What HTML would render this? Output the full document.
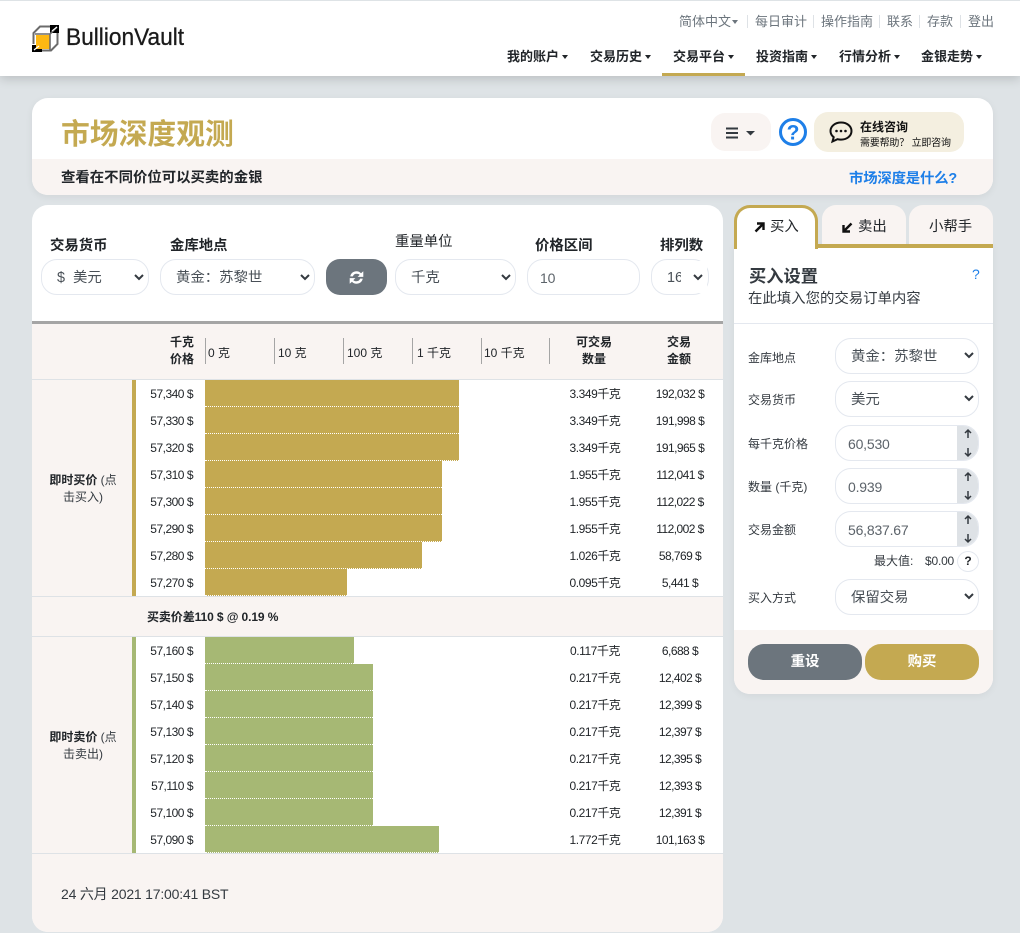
<!DOCTYPE html>
<html lang="zh"><head><meta charset="utf-8"><title>市场深度观测</title>
<style>
*{box-sizing:border-box}
html,body{margin:0;padding:0;width:1020px;height:933px;overflow:hidden;background:#dee3e6;font-family:"Liberation Sans","Noto Sans CJK SC",sans-serif;color:#212529}
.a{position:absolute}
.t{position:absolute;white-space:nowrap;line-height:1.2}
.box{position:absolute;background:#fff;border:1px solid #e4e8ef;border-radius:16px;height:36px;font-size:14.4px;color:#495057;line-height:37px;padding-left:15px;white-space:nowrap;overflow:hidden}
.num{font-size:14px;letter-spacing:-.2px;color:#5c636a;padding-left:12px;line-height:36px}
.car{position:absolute;display:block}
.sp{position:absolute;right:-1px;top:-1px;width:22px;height:36px;background:#dee2e6;border-radius:0 10px 10px 0}
.lb{position:absolute;font-size:12px;line-height:16px;left:748px;color:#343a40;white-space:nowrap}
.h{position:absolute;font-weight:700;font-size:14.4px;white-space:nowrap;color:#212529}
.tn{position:absolute;top:344px;font-size:12px;white-space:nowrap;color:#212529}
.tk{position:absolute;top:338px;width:1px;height:26px;background:#a5a5a5}
.p{position:absolute;left:136px;width:57px;text-align:right;font-size:12px;letter-spacing:-.5px;white-space:nowrap;color:#212529;line-height:16px}
.q{position:absolute;left:550px;width:90px;text-align:center;font-size:12px;letter-spacing:-.45px;white-space:nowrap;color:#212529;line-height:16px}
.v{position:absolute;left:640px;width:80px;text-align:center;font-size:12px;letter-spacing:-.55px;white-space:nowrap;color:#212529;line-height:16px}
.bg{position:absolute;left:205px;height:27px;background:#c4a951;border-bottom:1px dotted #fff}
.bs{position:absolute;left:205px;height:27px;background:#a6b874;border-bottom:1px dotted #fff}
.nav{position:absolute;top:46px;font-size:13px;font-weight:700;color:#212529;white-space:nowrap}
.top{position:absolute;top:11px;font-size:13px;color:#6c757d;white-space:nowrap}
.sep{position:absolute;top:15px;width:1px;height:13px;background:#dee2e6}
.cr{display:inline-block;width:0;height:0;border-left:3.5px solid transparent;border-right:3.5px solid transparent;border-top:4px solid currentColor;vertical-align:2px;margin-left:3px}
</style></head><body>

<!-- header -->
<div class="a" style="left:0;top:0;width:1020px;height:76px;background:#fff;border-top:1px solid #dee3e6;box-shadow:0 3px 10px rgba(0,0,0,.16)"></div>
<svg class="a" style="left:32px;top:25px" width="27" height="27" viewBox="0 0 27 27">
<rect x="0" y="20" width="10" height="7" fill="#000"/>
<rect x="18" y="0" width="9" height="8" fill="#000"/>
<path d="M1.500 19V8L8 1.500H18M25.500 8V19L19 25.500H10" fill="none" stroke="#6b6b6b" stroke-width="2"/>
<rect x="4" y="10" width="14" height="14" fill="#fdb813"/>
<path d="M3 9H18V25M18 9 25 2" fill="none" stroke="#6b6b6b" stroke-width="1.600"/>
<path d="M20 6 25 2M2 25 7 21" fill="none" stroke="#fff" stroke-width="1.200"/>
</svg>
<div class="t" style="left:66px;top:24px;font-size:24px;color:#1a1a1a;-webkit-text-stroke:.3px #1a1a1a;transform:scaleX(.945);transform-origin:0 0">BullionVault</div>

<div class="top" style="left:679px">简体中文<span class="cr" style="margin-left:1px"></span></div>
<div class="sep" style="left:747px"></div>
<div class="top" style="left:755px">每日审计</div><div class="sep" style="left:813px"></div>
<div class="top" style="left:821px">操作指南</div><div class="sep" style="left:879px"></div>
<div class="top" style="left:887px">联系</div><div class="sep" style="left:919px"></div>
<div class="top" style="left:927px">存款</div><div class="sep" style="left:960px"></div>
<div class="top" style="left:968px">登出</div>

<div class="nav" style="left:507px">我的账户<span class="cr"></span></div>
<div class="nav" style="left:590px">交易历史<span class="cr"></span></div>
<div class="nav" style="left:673px">交易平台<span class="cr"></span></div>
<div class="nav" style="left:756px">投资指南<span class="cr"></span></div>
<div class="nav" style="left:839px">行情分析<span class="cr"></span></div>
<div class="nav" style="left:921px">金银走势<span class="cr"></span></div>
<div class="a" style="left:662px;top:73px;width:83px;height:3px;background:#c4a951"></div>

<!-- title card -->
<div class="a" style="left:32px;top:98px;width:961px;height:97px;background:#fff;border-radius:16px;overflow:hidden;box-shadow:0 2px 8px rgba(0,0,0,.06)">
<div class="a" style="left:0;top:61px;width:961px;height:36px;background:#f9f4f2"></div>
</div>
<div class="t" style="left:61px;top:118px;font-size:28.800px;font-weight:700;color:#c4a951">市场深度观测</div>
<div class="t" style="left:61px;top:170px;font-size:14.400px;font-weight:700;color:#212529">查看在不同价位可以买卖的金银</div>
<div class="t" style="left:849px;top:171px;font-size:14.400px;font-weight:700;letter-spacing:-.2px;color:#1e7fe8">市场深度是什么?</div>
<div class="a" style="left:711px;top:113px;width:60px;height:38px;background:#f9f4f2;border-radius:14px"></div>
<svg class="a" style="left:726px;top:127px" width="32" height="12" viewBox="0 0 32 12"><path d="M0 1.500H12M0 6H12M0 10.500H12" stroke="#343a40" stroke-width="2"/><path d="M20 4h9l-4.500 4.500z" fill="#343a40"/></svg>
<svg class="a" style="left:779px;top:118px" width="28" height="28" viewBox="0 0 28 28"><circle cx="14" cy="14" r="12.500" fill="none" stroke="#1e7fe8" stroke-width="3"/><text x="14" y="21.500" text-anchor="middle" font-family="Liberation Sans" font-weight="700" font-size="21" fill="#1e7fe8">?</text></svg>
<div class="a" style="left:814px;top:112px;width:150px;height:40px;background:#f4efe0;border-radius:14px"></div>
<svg class="a" style="left:829px;top:120px" width="24" height="24" viewBox="0 0 24 24"><path d="M12 2.500C6 2.500 1.500 6.300 1.500 11c0 2.500 1.200 4.600 3.200 6.200L3.500 21.500l5-2.300c1.100.3 2.300.4 3.500.4 6 0 10.500-3.800 10.500-8.600S18 2.500 12 2.500z" fill="none" stroke="#111" stroke-width="2"/><circle cx="7.500" cy="11" r="1.300" fill="#111"/><circle cx="12" cy="11" r="1.300" fill="#111"/><circle cx="16.500" cy="11" r="1.300" fill="#111"/></svg>
<div class="t" style="left:860px;top:120px;font-size:12px;font-weight:700;color:#111">在线咨询</div>
<div class="t" style="left:860px;top:138px;font-size:10px;letter-spacing:-.2px;color:#111">需要帮助？ 立即咨询</div>

<!-- main card -->
<div class="a" style="left:32px;top:205px;width:691px;height:727px;background:#fff;border-radius:16px;overflow:hidden">
<div class="a" style="left:0;top:116px;width:691px;height:3px;background:#a5a5a5"></div>
<div class="a" style="left:0;top:119px;width:691px;height:56px;background:#f9f4f2;border-bottom:1px solid #dee2e6"></div>
<div class="a" style="left:0;top:175px;width:100px;height:216px;background:#f9f4f2"></div>
<div class="a" style="left:100px;top:175px;width:4px;height:216px;background:#c4a951"></div>
<div class="a" style="left:0;top:391px;width:691px;height:41px;background:#f9f4f2;border-top:1px solid #dee2e6;border-bottom:1px solid #dee2e6"></div>
<div class="a" style="left:0;top:432px;width:100px;height:216px;background:#f9f4f2"></div>
<div class="a" style="left:100px;top:432px;width:4px;height:216px;background:#a6b874"></div>
<div class="a" style="left:0;top:648px;width:691px;height:79px;background:#f9f4f2;border-top:1px solid #dee2e6"></div>
</div>

<!-- controls -->
<div class="h" style="left:50px;top:234px">交易货币</div>
<div class="h" style="left:170px;top:234px">金库地点</div>
<div class="t" style="left:395px;top:234px;font-size:14.400px;color:#212529">重量单位</div>
<div class="h" style="left:535px;top:234px">价格区间</div>
<div class="h" style="left:660px;top:234px">排列数</div>
<div class="box" style="left:41px;top:259px;width:108px">$&nbsp; 美元</div>
<div class="box" style="left:160px;top:259px;width:155px">黄金：苏黎世</div>
<div class="a" style="left:326px;top:259px;width:61px;height:36px;border-radius:14px;background:#6c757d"></div>
<svg class="a" style="left:348px;top:269px" width="17" height="17" viewBox="0 0 15 15"><path d="M2 6.500C2.500 3.500 5 2 7.500 2c1.700 0 3 .7 4 1.800L13.500 2v5h-5l1.800-1.800C9.700 4.500 8.700 4.200 7.500 4.200 6 4.200 4.800 5 4.300 6.500zM13 8.500c-.5 3-3 4.500-5.500 4.500-1.700 0-3-.7-4-1.800L1.500 13V8h5l-1.800 1.800c.6.700 1.600 1 2.800 1 1.500 0 2.700-.8 3.200-2.300z" fill="#fff"/></svg>
<div class="box" style="left:395px;top:259px;width:121px">千克</div>
<div class="box num" style="left:527px;top:259px;width:113px">10</div>
<div class="box" style="left:651px;top:259px;width:58px">16</div>
<svg class="car" style="left:134px;top:274px" width="10" height="7" viewBox="0 0 10 7"><path d="M1 1l4 4 4-4" fill="none" stroke="#343a40" stroke-width="2"/></svg>
<svg class="car" style="left:300px;top:274px" width="10" height="7" viewBox="0 0 10 7"><path d="M1 1l4 4 4-4" fill="none" stroke="#343a40" stroke-width="2"/></svg>
<svg class="car" style="left:501px;top:274px" width="10" height="7" viewBox="0 0 10 7"><path d="M1 1l4 4 4-4" fill="none" stroke="#343a40" stroke-width="2"/></svg>
<div class="a" style="left:681px;top:261px;width:26px;height:32px;background:#fff"></div>
<svg class="car" style="left:693px;top:274px" width="10" height="7" viewBox="0 0 10 7"><path d="M1 1l4 4 4-4" fill="none" stroke="#343a40" stroke-width="2"/></svg>

<!-- table head -->
<div class="t" style="left:164px;top:334px;width:30px;text-align:right;font-size:12px;font-weight:700;line-height:17px;white-space:normal">千克<br>价格</div>
<div class="tk" style="left:205px"></div><div class="tn" style="left:208px">0 克</div>
<div class="tk" style="left:274px"></div><div class="tn" style="left:278px">10 克</div>
<div class="tk" style="left:343px"></div><div class="tn" style="left:347px">100 克</div>
<div class="tk" style="left:412px"></div><div class="tn" style="left:417px">1 千克</div>
<div class="tk" style="left:481px"></div><div class="tn" style="left:484px">10 千克</div>
<div class="tk" style="left:549px"></div>
<div class="t" style="left:564px;top:334px;width:60px;text-align:center;font-size:12px;font-weight:700;line-height:17px;white-space:normal">可交易<br>数量</div>
<div class="t" style="left:649px;top:334px;width:60px;text-align:center;font-size:12px;font-weight:700;line-height:17px;white-space:normal">交易<br>金额</div>

<!-- sell-side rows -->
<div class="bg" style="top:380px;width:254px"></div><div class="bg" style="top:407px;width:254px"></div><div class="bg" style="top:434px;width:254px"></div>
<div class="bg" style="top:461px;width:237px"></div><div class="bg" style="top:488px;width:237px"></div><div class="bg" style="top:515px;width:237px"></div>
<div class="bg" style="top:542px;width:217px"></div><div class="bg" style="top:569px;width:142px"></div>

<div class="p" style="top:386px">57,340 $</div><div class="q" style="top:386px">3.349千克</div><div class="v" style="top:386px">192,032 $</div>
<div class="p" style="top:413px">57,330 $</div><div class="q" style="top:413px">3.349千克</div><div class="v" style="top:413px">191,998 $</div>
<div class="p" style="top:440px">57,320 $</div><div class="q" style="top:440px">3.349千克</div><div class="v" style="top:440px">191,965 $</div>
<div class="p" style="top:467px">57,310 $</div><div class="q" style="top:467px">1.955千克</div><div class="v" style="top:467px">112,041 $</div>
<div class="p" style="top:494px">57,300 $</div><div class="q" style="top:494px">1.955千克</div><div class="v" style="top:494px">112,022 $</div>
<div class="p" style="top:521px">57,290 $</div><div class="q" style="top:521px">1.955千克</div><div class="v" style="top:521px">112,002 $</div>
<div class="p" style="top:548px">57,280 $</div><div class="q" style="top:548px">1.026千克</div><div class="v" style="top:548px">58,769 $</div>
<div class="p" style="top:575px">57,270 $</div><div class="q" style="top:575px">0.095千克</div><div class="v" style="top:575px">5,441 $</div>

<div class="t" style="left:47px;top:472px;width:72px;text-align:center;font-size:12px;line-height:17px;white-space:normal;color:#343a40"><b style="color:#212529">即时买价</b> (点<br>击买入)</div>
<div class="t" style="left:147px;top:610px;font-size:12px;font-weight:700;letter-spacing:-.1px">买卖价差110 $ @ 0.19 %</div>

<!-- buy-side rows -->
<div class="bs" style="top:637px;width:149px"></div><div class="bs" style="top:664px;width:168px"></div><div class="bs" style="top:691px;width:168px"></div>
<div class="bs" style="top:718px;width:168px"></div><div class="bs" style="top:745px;width:168px"></div><div class="bs" style="top:772px;width:168px"></div>
<div class="bs" style="top:799px;width:168px"></div><div class="bs" style="top:826px;width:234px"></div>

<div class="p" style="top:643px">57,160 $</div><div class="q" style="top:643px">0.117千克</div><div class="v" style="top:643px">6,688 $</div>
<div class="p" style="top:670px">57,150 $</div><div class="q" style="top:670px">0.217千克</div><div class="v" style="top:670px">12,402 $</div>
<div class="p" style="top:697px">57,140 $</div><div class="q" style="top:697px">0.217千克</div><div class="v" style="top:697px">12,399 $</div>
<div class="p" style="top:724px">57,130 $</div><div class="q" style="top:724px">0.217千克</div><div class="v" style="top:724px">12,397 $</div>
<div class="p" style="top:751px">57,120 $</div><div class="q" style="top:751px">0.217千克</div><div class="v" style="top:751px">12,395 $</div>
<div class="p" style="top:778px">57,110 $</div><div class="q" style="top:778px">0.217千克</div><div class="v" style="top:778px">12,393 $</div>
<div class="p" style="top:805px">57,100 $</div><div class="q" style="top:805px">0.217千克</div><div class="v" style="top:805px">12,391 $</div>
<div class="p" style="top:832px">57,090 $</div><div class="q" style="top:832px">1.772千克</div><div class="v" style="top:832px">101,163 $</div>

<div class="t" style="left:47px;top:729px;width:72px;text-align:center;font-size:12px;line-height:17px;white-space:normal;color:#343a40"><b style="color:#212529">即时卖价</b> (点<br>击卖出)</div>
<div class="t" style="left:61px;top:886px;font-size:14px;letter-spacing:-.2px;color:#343a40">24 六月 2021 17:00:41 BST</div>

<!-- right panel -->
<div class="a" style="left:734px;top:244px;width:259px;height:450px;background:#fff;border-radius:0 0 16px 16px;overflow:hidden;box-shadow:0 2px 8px rgba(0,0,0,.05)">
<div class="a" style="left:0;top:0;width:259px;height:4px;background:#c4a951"></div>
<div class="a" style="left:0;top:79px;width:259px;height:1px;background:#e4e8ef"></div>
<div class="a" style="left:0;top:386px;width:259px;height:64px;background:#f9f4f2"></div>
</div>
<div class="a" style="left:822px;top:205px;width:84px;height:39px;background:#f9f4f2;border-radius:14px 14px 0 0"></div>
<div class="a" style="left:909px;top:205px;width:84px;height:39px;background:#f9f4f2;border-radius:14px 14px 0 0"></div>
<div class="a" style="left:734px;top:205px;width:84px;height:44px;background:#fff;border:3px solid #c4a951;border-bottom:0;border-radius:16px 16px 0 0"></div>
<svg class="a" style="left:754px;top:222px" width="11" height="11" viewBox="0 0 11 11"><path d="M1.500 9.500 9 2M3 1.500H9.500V8" fill="none" stroke="#111" stroke-width="2.400"/></svg>
<div class="t" style="left:770px;top:219px;font-size:14.400px;color:#212529">买入</div>
<svg class="a" style="left:842px;top:222px" width="11" height="11" viewBox="0 0 11 11"><path d="M9.500 1.500 2 9M1.500 3V9.500H8" fill="none" stroke="#111" stroke-width="2.400"/></svg>
<div class="t" style="left:858px;top:219px;font-size:14.400px;color:#212529">卖出</div>
<div class="t" style="left:929px;top:219px;font-size:14.400px;color:#212529">小帮手</div>

<div class="t" style="left:749px;top:266px;font-size:17.280px;font-weight:700;color:#343a40">买入设置</div>
<div class="t" style="left:748px;top:291px;font-size:14.400px;color:#343a40">在此填入您的交易订单内容</div>
<div class="t" style="left:972px;top:266px;font-size:14px;color:#1e7fe8">?</div>

<div class="lb" style="top:350px">金库地点</div>
<div class="box" style="left:835px;top:338px;width:144px">黄金：苏黎世</div>
<svg class="car" style="left:964px;top:352px" width="10" height="7" viewBox="0 0 10 7"><path d="M1 1l4 4 4-4" fill="none" stroke="#343a40" stroke-width="2"/></svg>
<div class="lb" style="top:392px">交易货币</div>
<div class="box" style="left:835px;top:381px;width:144px">美元</div>
<svg class="car" style="left:964px;top:395px" width="10" height="7" viewBox="0 0 10 7"><path d="M1 1l4 4 4-4" fill="none" stroke="#343a40" stroke-width="2"/></svg>
<div class="lb" style="top:436px">每千克价格</div>
<div class="box num" style="left:835px;top:425px;width:144px">60,530<div class="sp"></div></div>
<div class="lb" style="top:479px">数量 (千克)</div>
<div class="box num" style="left:835px;top:468px;width:144px">0.939<div class="sp"></div></div>
<div class="lb" style="top:522px">交易金额</div>
<div class="box num" style="left:835px;top:511px;width:144px">56,837.67<div class="sp"></div></div>

<svg class="a" style="left:957px;top:425px" width="22" height="122" viewBox="0 0 22 122"><g fill="none" stroke="#343a40" stroke-width="1.500"><path d="M11 13V5M8 8l3-3 3 3M11 23v8M8 28l3 3 3-3"/><path d="M11 56V48M8 51l3-3 3 3M11 66v8M8 71l3 3 3-3"/><path d="M11 99V91M8 94l3-3 3 3M11 109v8M8 114l3 3 3-3"/></g></svg>

<div class="t" style="left:874px;top:554px;font-size:12px;color:#343a40">最大值:</div>
<div class="t" style="left:925px;top:554px;font-size:12px;letter-spacing:-.2px;color:#343a40">$0.00</div>
<div class="a" style="left:957px;top:551px;width:22px;height:21px;background:#fff;border:1px solid #e4e8ef;border-radius:50%;text-align:center;font-size:12px;font-weight:700;line-height:19px">?</div>

<div class="lb" style="top:590px">买入方式</div>
<div class="box" style="left:835px;top:579px;width:144px">保留交易</div>
<svg class="car" style="left:964px;top:593px" width="10" height="7" viewBox="0 0 10 7"><path d="M1 1l4 4 4-4" fill="none" stroke="#343a40" stroke-width="2"/></svg>

<div class="a" style="left:748px;top:644px;width:114px;height:36px;background:#6c757d;border-radius:16px;color:#fff;text-align:center;font-size:14.400px;font-weight:700;line-height:36px">重设</div>
<div class="a" style="left:865px;top:644px;width:114px;height:36px;background:#c4a951;border-radius:16px;color:#fff;text-align:center;font-size:14.400px;font-weight:700;line-height:36px">购买</div>

</body></html>
